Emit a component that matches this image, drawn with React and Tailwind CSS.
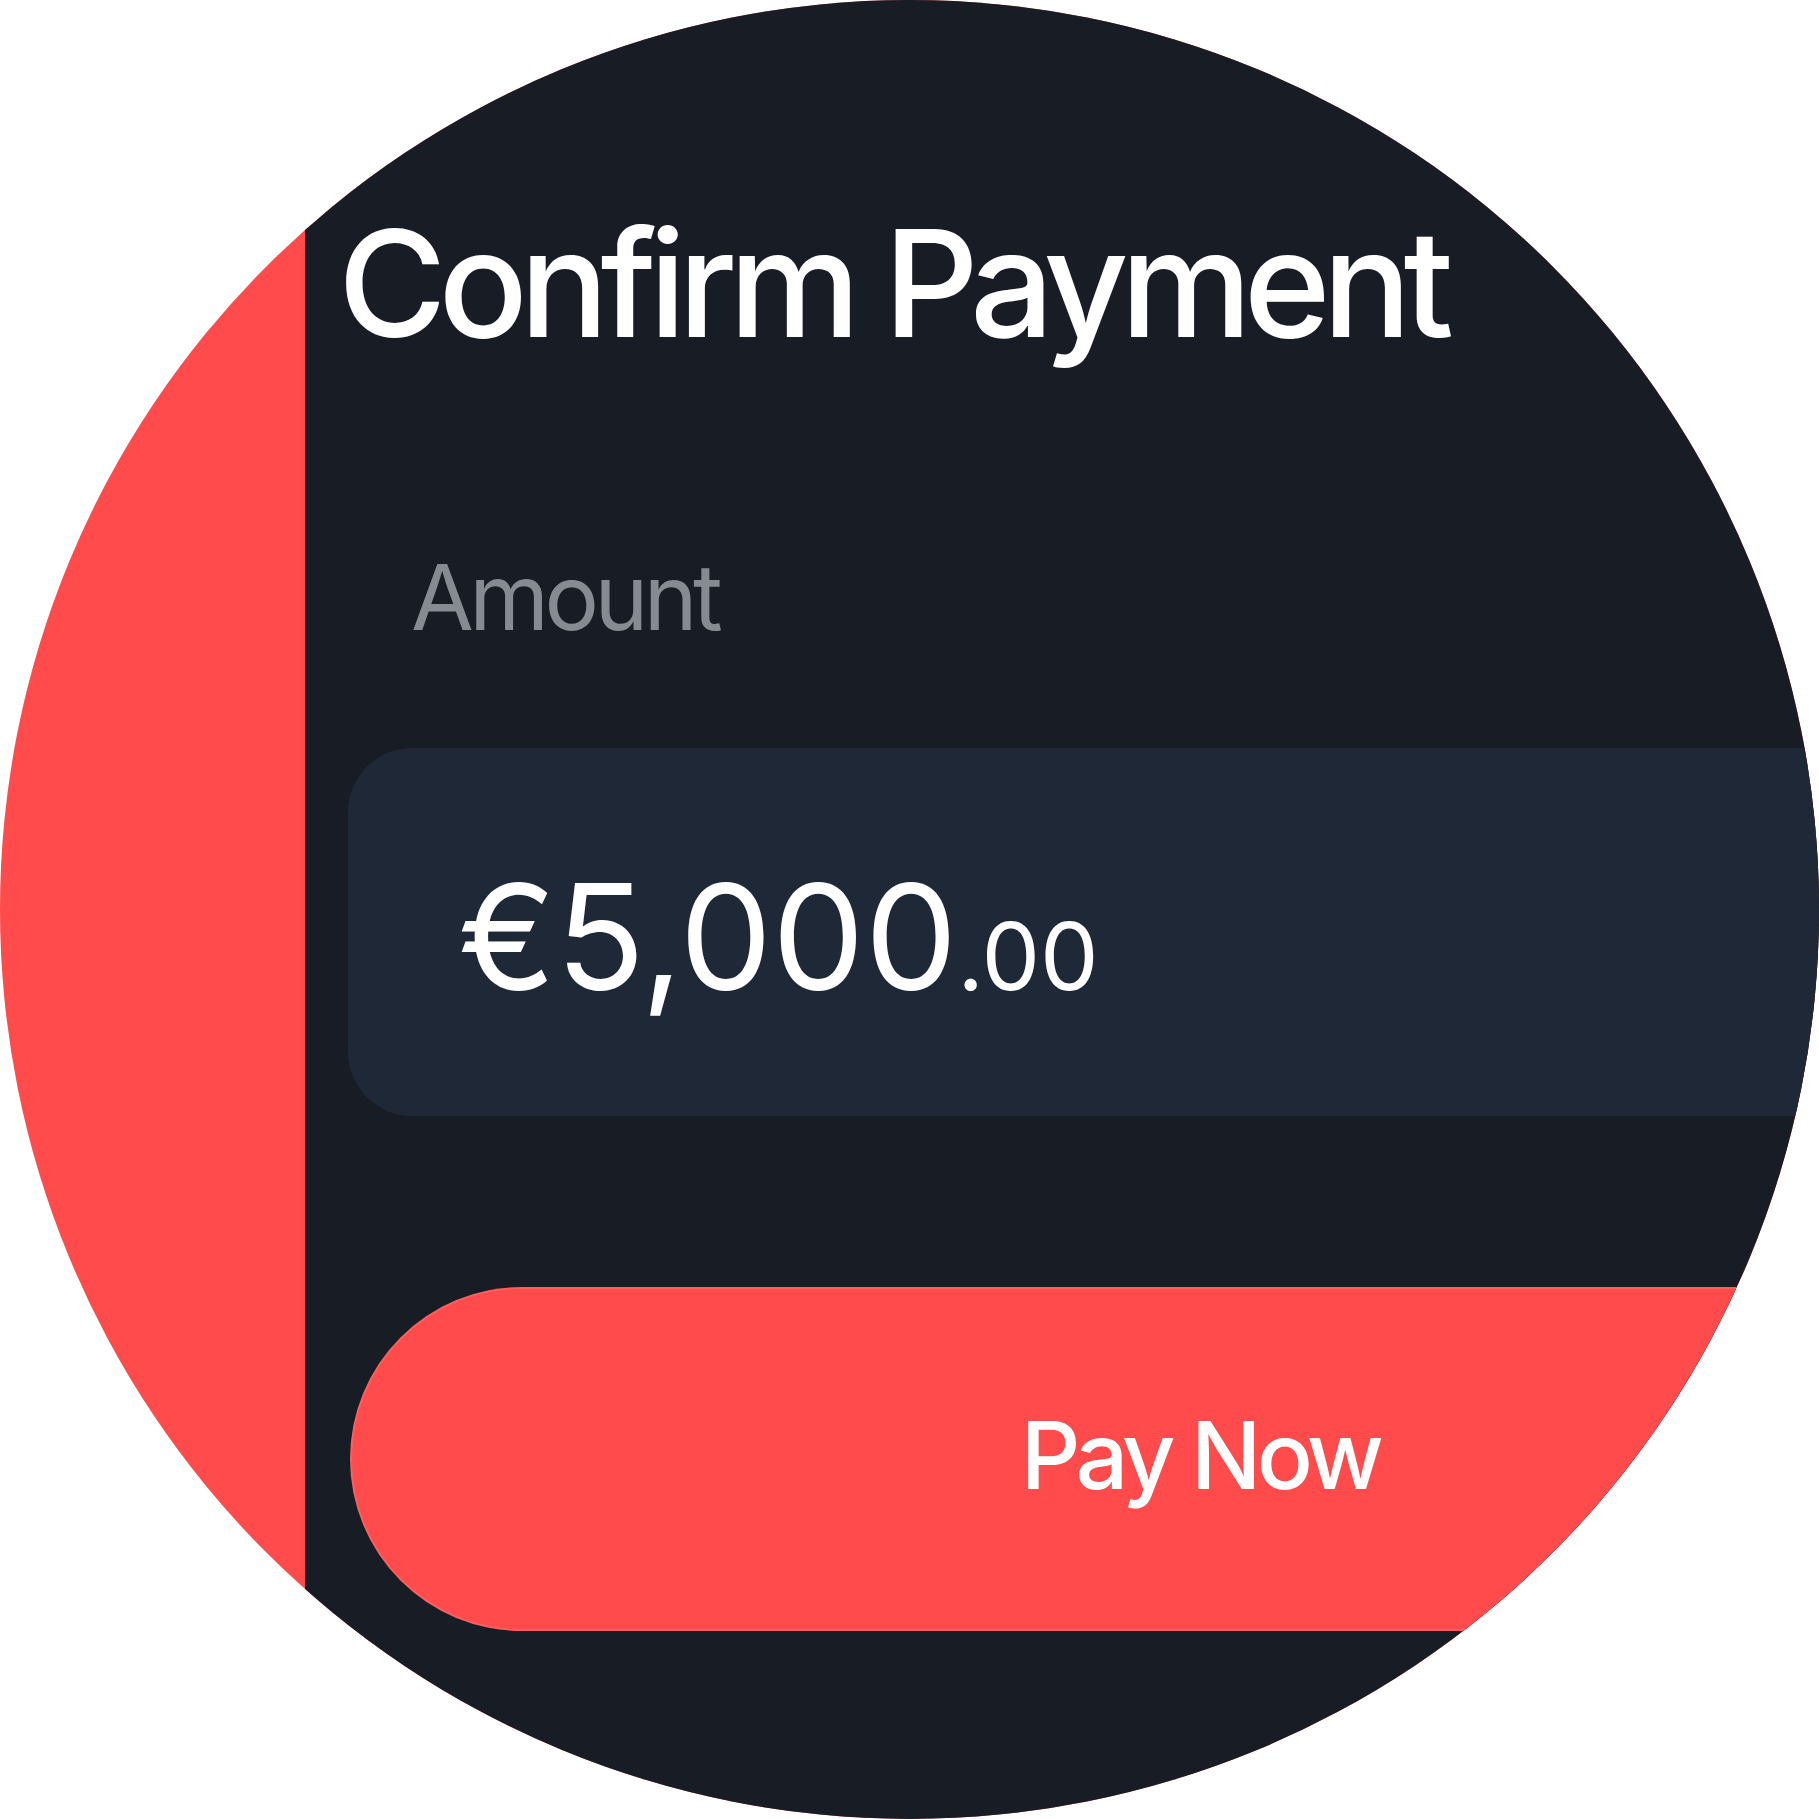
export default function App() {
  return (
    <div className="w-[1819px] h-[1819px] bg-white">
      <div className="w-[1819px] h-[1819px] rounded-full overflow-hidden bg-[#ff4b4b] flex">
        {/* red strip */}
        <div className="w-[305px] shrink-0" />

        {/* dark panel */}
        <div
          className="shrink-0 w-[1800px] h-full bg-[#181c24] pl-[40px] pt-[210px] text-white"
          style={{ fontFamily: "Inter, 'Noto Sans', sans-serif" }}
        >
          <h1 className="-ml-[7px] text-[148px] leading-none font-medium tracking-[-0.055em]">Confirm Payment</h1>

          <div className="mt-[194px] pl-[66px] text-[91px] leading-none text-[#868a91] tracking-[-0.05em]">Amount</div>

          <div className="mt-[105px] ml-[3px] w-[1702px] h-[368px] rounded-[64px] bg-[#1f2836] pl-[110px] pt-[115px]">
            <div className="flex items-baseline leading-none tracking-[-0.01em]">
              <span className="text-[147px]">€5,000</span>
              <span className="text-[93px]">.00</span>
            </div>
          </div>

          <button className="mt-[171px] ml-[5px] w-[1700px] h-[344px] rounded-full bg-[#ff4b4b] border-2 border-white/10 flex items-center justify-center pb-[7px] text-[93px] leading-none font-medium tracking-[-0.05em] text-white">
            Pay Now
          </button>
        </div>
      </div>
    </div>
  );
}
